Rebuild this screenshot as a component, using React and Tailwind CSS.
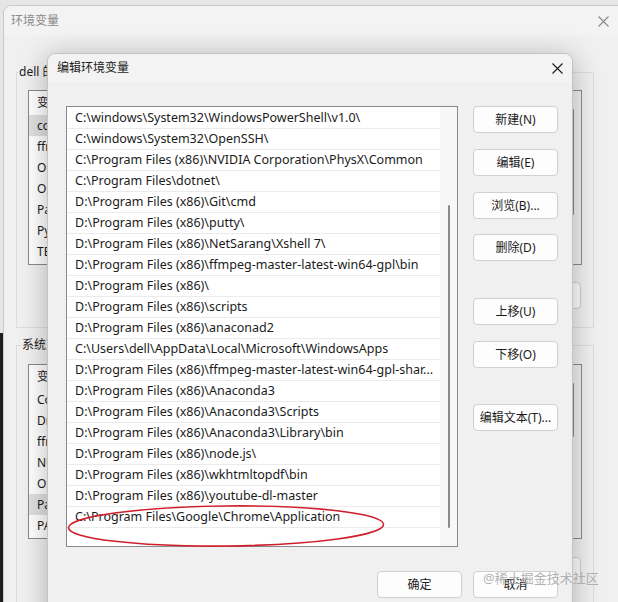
import React from "react";

const paths = [
  "C:\\windows\\System32\\WindowsPowerShell\\v1.0\\",
  "C:\\windows\\System32\\OpenSSH\\",
  "C:\\Program Files (x86)\\NVIDIA Corporation\\PhysX\\Common",
  "C:\\Program Files\\dotnet\\",
  "D:\\Program Files (x86)\\Git\\cmd",
  "D:\\Program Files (x86)\\putty\\",
  "D:\\Program Files (x86)\\NetSarang\\Xshell 7\\",
  "D:\\Program Files (x86)\\ffmpeg-master-latest-win64-gpl\\bin",
  "D:\\Program Files (x86)\\",
  "D:\\Program Files (x86)\\scripts",
  "D:\\Program Files (x86)\\anaconad2",
  "C:\\Users\\dell\\AppData\\Local\\Microsoft\\WindowsApps",
  "D:\\Program Files (x86)\\ffmpeg-master-latest-win64-gpl-shar...",
  "D:\\Program Files (x86)\\Anaconda3",
  "D:\\Program Files (x86)\\Anaconda3\\Scripts",
  "D:\\Program Files (x86)\\Anaconda3\\Library\\bin",
  "D:\\Program Files (x86)\\node.js\\",
  "D:\\Program Files (x86)\\wkhtmltopdf\\bin",
  "D:\\Program Files (x86)\\youtube-dl-master",
  "C:\\Program Files\\Google\\Chrome\\Application",
];

const userVars = ["com.zerotier", "ffmpeg", "OneDrive", "OneDriveConsumer", "Path", "PyCharm", "TEMP"];
const sysVars = ["ComSpec", "DriverData", "ffmpeg", "NUMBER_OF_PROCESSORS", "OS", "Path", "PATHEXT"];

const CloseIcon = ({ color }) => (
  <svg width="11" height="11" viewBox="0 0 11 11" fill="none" stroke={color} strokeWidth="1.1">
    <path d="M0.5 0.5 L10.5 10.5 M10.5 0.5 L0.5 10.5" />
  </svg>
);

const Btn = ({ children, className = "" }) => (
  <button
    className={`flex h-[27px] w-[85px] items-center justify-center rounded-[4px] border border-[#d0d0d0] bg-[#fdfdfd] text-[12px] text-[#1b1b1b] ${className}`}
  >
    {children}
  </button>
);

const VarList = ({ rows, selected, thumbTop, thumbHeight }) => (
  <div className="flex h-[175px] border border-[#8a8a8a] bg-white">
    <div className="flex-1 overflow-hidden">
      <div className="flex h-[24px] items-center pl-[8px] text-[12px] text-[#1b1b1b]">变量</div>
      {rows.map((r, i) => (
        <div
          key={i}
          className={`flex h-[21px] items-center whitespace-nowrap pl-[8px] text-[12px] text-[#1b1b1b] ${
            i === selected ? "bg-[#e0e0e0]" : ""
          }`}
        >
          {r}
        </div>
      ))}
    </div>
    <div className="flex w-[17px] justify-center bg-[#f0f0f0]">
      <div className="w-[2px] rounded-full bg-[#8b8b8b]" style={{ marginTop: thumbTop, height: thumbHeight }} />
    </div>
  </div>
);

export default function App() {
  return (
    <div className="relative h-[602px] w-[618px] overflow-hidden bg-[#e6e6e6] font-['Segoe_UI','Noto_Sans','Noto_Sans_CJK_SC',sans-serif]">
      {/* desktop strip on the left */}
      <div className="absolute left-0 top-[333px] h-[270px] w-[5px] bg-[#1e1e1e]" />

      {/* background window: 环境变量 */}
      <div className="absolute left-[3px] top-[5px] h-[640px] w-[630px] rounded-tl-[8px] border border-[#c9c9c9] bg-[#f0f0f0]">
        <div className="flex h-[30px] items-center justify-between bg-[#f3f3f3] pl-[7px] pr-[23px] rounded-tl-[8px]">
          <span className="text-[12px] text-[#8a8a8a]">环境变量</span>
          <CloseIcon color="#8a8a8a" />
        </div>
        <div className="flex w-[590px] flex-col pl-[12px] pt-[28px]">
          <fieldset className="border border-[#dcdcdc] px-[11px] pb-[18px]">
            <legend className="-ml-[10px] px-[1px] text-[12px] leading-[16px] text-[#1b1b1b]">dell 的用户变量(U)</legend>
            <div className="mt-[10px]">
              <VarList rows={userVars} selected={0} thumbTop={18} thumbHeight={106} />
            </div>
            <div className="mt-[17px] flex justify-end gap-[10px] pr-[1px]">
              <Btn className="h-[26px]">新建(N)...</Btn>
              <Btn className="h-[26px]">编辑(E)...</Btn>
              <Btn className="h-[26px]">删除(D)</Btn>
            </div>
          </fieldset>
          <fieldset className="mt-[9px] border border-[#dcdcdc] px-[11px] pb-[18px]">
            <legend className="-ml-[7px] px-[1px] text-[12px] leading-[16px] text-[#1b1b1b]">系统变量(S)</legend>
            <div className="mt-[11px]">
              <VarList rows={sysVars} selected={5} thumbTop={18} thumbHeight={54} />
            </div>
            <div className="mt-[18px] flex justify-end gap-[10px] pr-[1px]">
              <Btn className="h-[26px]">新建(W)...</Btn>
              <Btn className="h-[26px]">编辑(I)...</Btn>
              <Btn className="h-[26px]">删除(L)</Btn>
            </div>
          </fieldset>
        </div>
      </div>

      {/* foreground window: 编辑环境变量 */}
      <div className="absolute left-[47px] top-[53px] h-[580px] w-[526px] rounded-t-[8px] border border-[#c4c4c4] bg-[#f0f0f0] shadow-[0_4px_28px_rgba(0,0,0,0.28)]">
        <div className="flex h-[28px] items-center justify-between rounded-t-[8px] bg-[#f3f3f3] pl-[9px] pr-[9px]">
          <span className="text-[12px] text-[#1b1b1b]">编辑环境变量</span>
          <CloseIcon color="#1b1b1b" />
        </div>
        <div className="flex gap-[15px] pl-[18px] pr-[14px] pt-[24px]">
          <div className="flex h-[441px] w-[392px] border border-[#8a8a8a] bg-white">
            <div className="flex-1 pt-[1px]">
              {paths.map((p, i) => (
                <div
                  key={i}
                  className="flex h-[21px] items-center whitespace-nowrap border-b border-[#ebebeb] pl-[8px] text-[12.5px] text-[#1b1b1b]"
                >
                  {p}
                </div>
              ))}
            </div>
            <div className="flex w-[17px] justify-center bg-[#f7f7f7]">
              <div className="mt-[98px] h-[323px] w-[2px] rounded-full bg-[#8b8b8b]" />
            </div>
          </div>
          <div className="flex flex-col">
            <Btn>新建(N)</Btn>
            <Btn className="mt-[16px]">编辑(E)</Btn>
            <Btn className="mt-[16px]">浏览(B)...</Btn>
            <Btn className="mt-[15px]">删除(D)</Btn>
            <Btn className="mt-[37px]">上移(U)</Btn>
            <Btn className="mt-[16px]">下移(O)</Btn>
            <Btn className="mt-[36px]">编辑文本(T)...</Btn>
          </div>
        </div>
        <div className="flex justify-end gap-[11px] pr-[14px] pt-[24px]">
          <Btn className="border-[#1f5f94]">确定</Btn>
          <Btn>取消</Btn>
        </div>
      </div>

      {/* red annotation */}
      <svg className="pointer-events-none absolute left-0 top-0" width="618" height="602">
        <ellipse cx="226" cy="526" rx="157.5" ry="20" fill="none" stroke="#cf1f2c" strokeWidth="1.6" transform="rotate(-0.6 226 526)" />
      </svg>

      {/* watermark */}
      <div className="pointer-events-none absolute left-[483px] top-[569px] text-[13px] leading-[18px] text-[#a8a8a8]/90">
        @稀土掘金技术社区
      </div>
    </div>
  );
}
